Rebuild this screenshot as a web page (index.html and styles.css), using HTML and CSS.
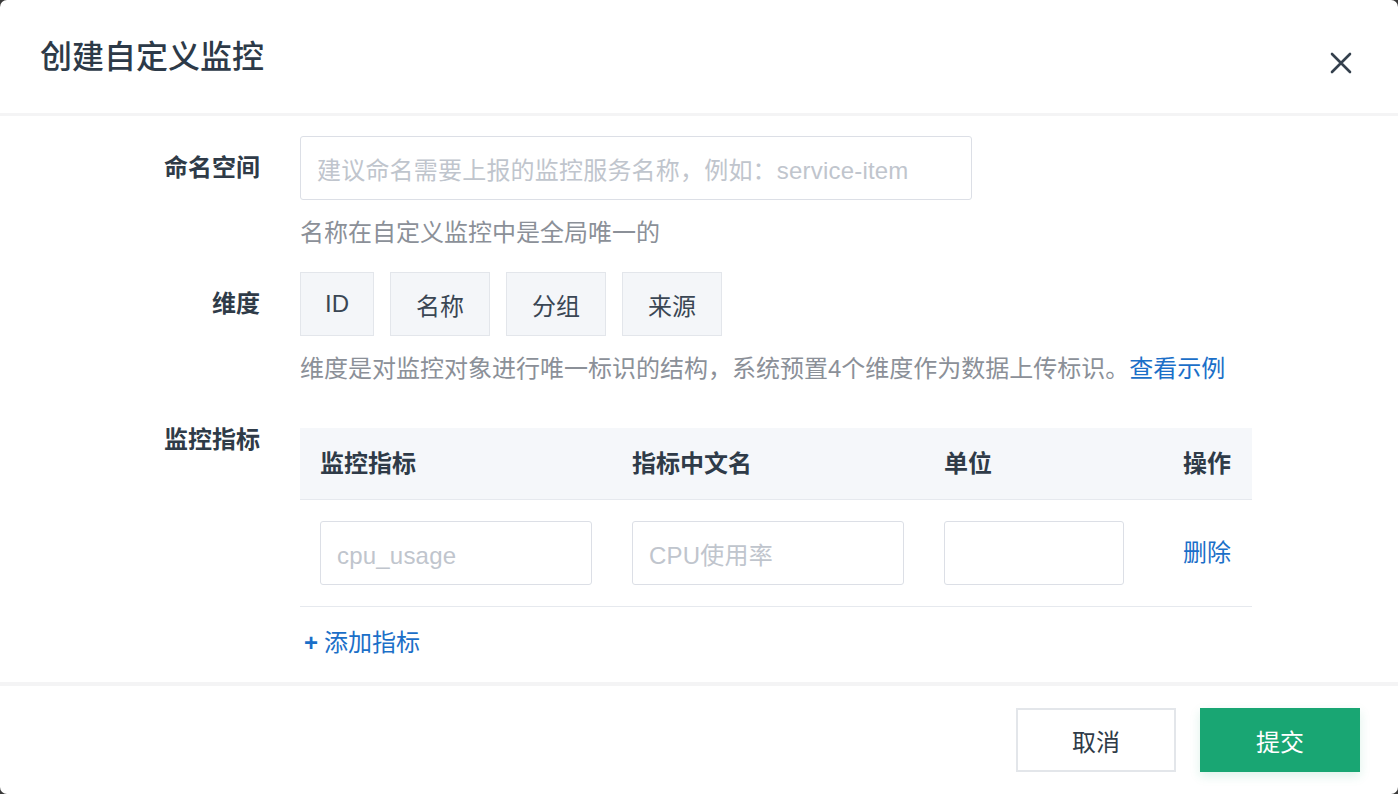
FILE: index.html
```html
<!DOCTYPE html>
<html lang="zh-CN">
<head>
    <meta charset="UTF-8">
    <meta name="viewport" content="width=device-width, initial-scale=1.0">
    <title>创建自定义监控</title>
    <link rel="stylesheet" href="styles.css">
</head>
<body>
    <div class="dialog">
        <div class="dialog-header">
            <h1 class="dialog-title">创建自定义监控</h1>
            <button class="close" aria-label="关闭">
                <svg width="22" height="22" viewBox="0 0 22 22">
                    <path d="M2 2 L20 20 M20 2 L2 20" stroke="#34404d" stroke-width="2.6" stroke-linecap="round"/>
                </svg>
            </button>
        </div>

        <div class="dialog-body">
            <div class="form-item">
                <label class="form-label">命名空间</label>
                <div class="form-control">
                    <input class="input input-wide" type="text" placeholder="建议命名需要上报的监控服务名称，例如：service-item">
                    <p class="help">名称在自定义监控中是全局唯一的</p>
                </div>
            </div>

            <div class="form-item form-item-last">
                <label class="form-label">维度</label>
                <div class="form-control">
                    <div class="tags">
                        <span class="tag">ID</span>
                        <span class="tag">名称</span>
                        <span class="tag">分组</span>
                        <span class="tag">来源</span>
                    </div>
                    <p class="help">维度是对监控对象进行唯一标识的结构，系统预置4个维度作为数据上传标识。<a class="link" href="#">查看示例</a></p>
                </div>
            </div>

            <div class="form-item">
                <label class="form-label form-label-top">监控指标</label>
                <div class="form-control">
                    <div class="metrics">
                        <div class="metrics-row metrics-head">
                            <div class="cell">监控指标</div>
                            <div class="cell">指标中文名</div>
                            <div class="cell">单位</div>
                            <div class="cell cell-op">操作</div>
                        </div>
                        <div class="metrics-row">
                            <div class="cell"><input class="input input-name" type="text" placeholder="cpu_usage"></div>
                            <div class="cell"><input class="input input-name" type="text" placeholder="CPU使用率"></div>
                            <div class="cell"><input class="input input-unit" type="text"></div>
                            <div class="cell cell-op"><a class="link" href="#">删除</a></div>
                        </div>
                    </div>
                    <a class="link add" href="#"><span class="plus">+</span>添加指标</a>
                </div>
            </div>
        </div>

        <div class="dialog-footer">
            <button class="btn btn-default">取消</button>
            <button class="btn btn-primary">提交</button>
        </div>
    </div>
</body>
</html>
```

FILE: styles.css
```css
html {
    background: #3a3a3a;
}
body {
    margin: 0;
    font-family: "Liberation Sans", "Noto Sans CJK SC", sans-serif;
    font-size: 24px;
    color: #2f3b48;
}
.dialog {
    width: 1398px;
    height: 794px;
    background: #fff;
    border-radius: 7px;
    display: flex;
    flex-direction: column;
    overflow: hidden;
}
.dialog-header {
    height: 113px;
    padding: 0 46px 0 40px;
    display: flex;
    align-items: center;
    justify-content: space-between;
    border-bottom: 3px solid #f4f4f5;
    flex-shrink: 0;
}
.dialog-title {
    margin: 0;
    font-size: 32px;
    font-weight: 500;
    color: #2d3a48;
    line-height: 40px;
}
.close {
    border: none;
    background: none;
    padding: 0;
    width: 22px;
    height: 22px;
    margin-top: 12px;
    cursor: pointer;
}
.dialog-body {
    flex: 1;
    padding-top: 20px;
}
.form-item {
    display: flex;
    margin-bottom: 22px;
}
.form-item-last {
    margin-bottom: 42px;
}
.form-label {
    width: 260px;
    flex-shrink: 0;
    padding-right: 40px;
    box-sizing: content-box;
    text-align: right;
    font-weight: 700;
    line-height: 64px;
    color: #2f3b48;
}
.form-label-top {
    line-height: 24px;
}
.form-control {
    flex: 1;
}
.input {
    box-sizing: border-box;
    height: 64px;
    padding: 5px 16px 0;
    border: 1px solid #dcdfe6;
    border-radius: 3px;
    font-family: inherit;
    font-size: 24px;
    color: #2f3b48;
    letter-spacing: 0.2px;
    outline: none;
}
.input::placeholder {
    color: #c0c5cd;
}
.input-wide {
    width: 672px;
}
.input-name {
    width: 272px;
}
.input-unit {
    width: 180px;
}
.help {
    margin: 16px 0 0;
    line-height: 34px;
    color: #8b9098;
}
.link {
    color: #1b6fc8;
    text-decoration: none;
}
.tags {
    display: flex;
    gap: 16px;
}
.tag {
    height: 64px;
    box-sizing: border-box;
    padding: 0 25px;
    display: flex;
    align-items: center;
    background: #f4f6f9;
    border: 1px solid #e3e6eb;
    color: #3a4654;
}
.tag:first-child {
    padding: 0 24px;
}
.metrics {
    width: 952px;
}
.metrics-row {
    display: grid;
    grid-template-columns: 312px 312px 1fr 120px;
    align-items: center;
    padding: 21px 0;
    border-bottom: 1px solid #e6e9ee;
}
.metrics-head {
    height: 72px;
    box-sizing: border-box;
    padding: 0;
    background: #f5f7fa;
    font-weight: 700;
}
.cell {
    padding-left: 20px;
    line-height: 34px;
}
.cell-op {
    text-align: right;
    padding-right: 21px;
}
.add {
    display: inline-block;
    margin-top: 19px;
    margin-left: 4px;
    line-height: 34px;
}
.plus {
    font-weight: 700;
    margin-right: 6px;
}
.dialog-footer {
    flex-shrink: 0;
    border-top: 4px solid #f4f4f5;
    padding: 22px 38px 22px 0;
    display: flex;
    justify-content: flex-end;
    gap: 24px;
}
.btn {
    width: 160px;
    height: 64px;
    font-family: inherit;
    font-size: 24px;
    cursor: pointer;
}
.btn-default {
    background: #fff;
    border: 2px solid #e3e6ea;
    color: #2f3b48;
}
.btn-primary {
    background: #19a673;
    border: none;
    color: #fff;
    box-shadow: 0 4px 10px rgba(25, 166, 115, 0.15);
}
```
